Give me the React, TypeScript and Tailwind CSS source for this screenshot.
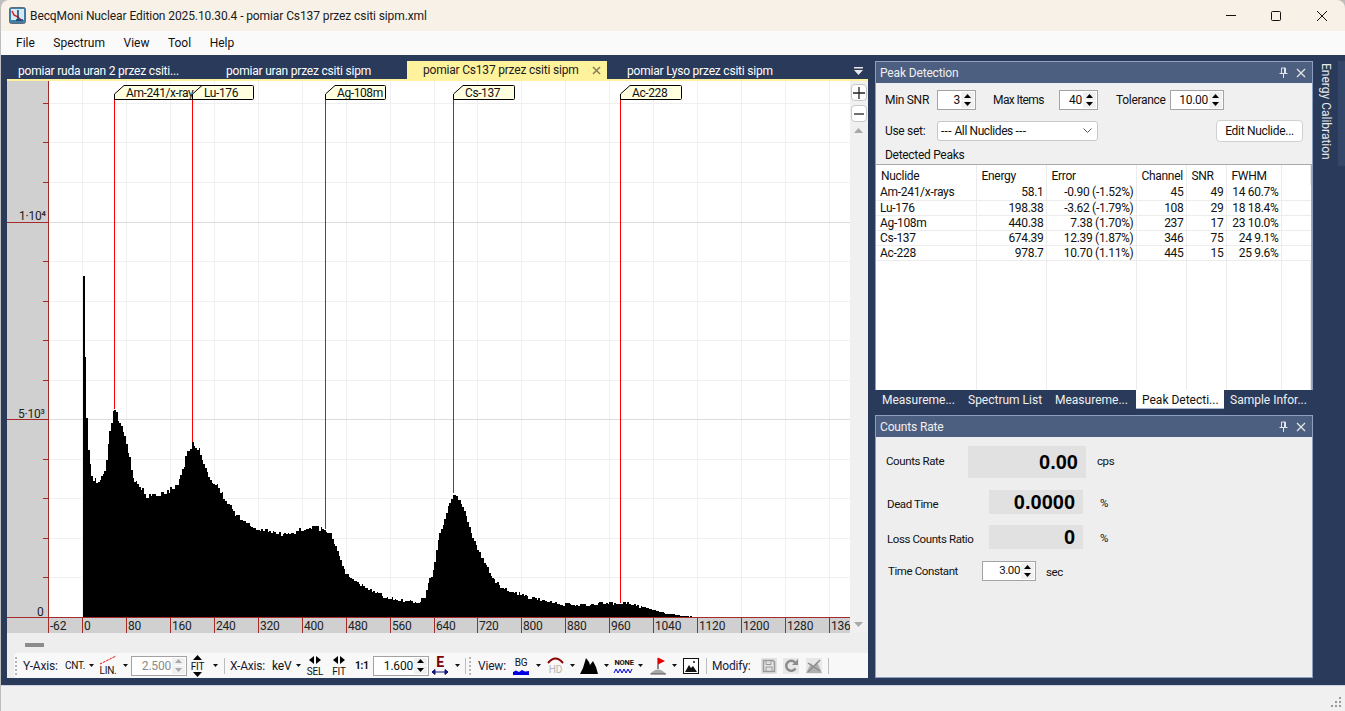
import React from 'react';

// Spectrum outline, page x / page y of the top of the bars
const outline: [number, number][] = [
  [83, 276], [84.5, 341], [85, 393], [87, 431], [88, 451], [90, 467], [91, 476], [93, 479], [96, 481], [100, 482],
  [102, 473], [105, 473], [106, 463], [107, 453], [109, 434], [111, 422], [113, 413], [115, 409], [117, 420], [119, 419],
  [121, 428], [124, 438], [126, 448], [128, 452], [130, 463], [132, 475], [134, 480], [138, 485], [142, 490], [146, 496],
  [150, 494], [156, 495], [165, 494], [171, 489], [176, 486], [180, 477], [184, 464], [187, 452], [190, 447], [193, 442],
  [196, 449], [199, 451], [202, 458], [205, 467], [210, 479], [213, 483], [218, 488], [222, 493], [226, 503], [231, 509],
  [235, 515], [240, 518], [246, 524], [252, 527], [260, 530], [270, 531], [280, 534], [290, 535], [300, 530], [310, 527],
  [322, 529], [330, 534], [334, 543], [337, 552], [341, 562], [345, 573], [350, 577], [355, 581], [365, 587], [375, 592],
  [385, 597], [395, 599], [405, 601], [415, 602], [420, 601], [425, 597], [428, 583], [433, 570], [438, 540], [443, 523],
  [448, 507], [452, 497], [454, 493], [460, 503], [465, 512], [470, 530], [475, 543], [480, 555], [487, 568], [493, 580],
  [503, 588], [513, 592], [527, 597], [543, 601], [563, 604], [583, 605], [603, 603], [627, 603], [637, 606], [650, 609],
  [663, 613], [677, 615], [690, 616.6], [695, 617],
];

function buildSpectrum() {
  let seed = 4711;
  const rnd = () => {
    seed = (seed * 1103515245 + 12345) & 0x7fffffff;
    return seed / 0x7fffffff - 0.5;
  };
  let d = 'M83 617';
  let k = 0;
  for (let x = 83; x < 695; x += 1.65) {
    while (k < outline.length - 2 && outline[k + 1][0] <= x) k++;
    const [x0, y0] = outline[k];
    const [x1, y1] = outline[k + 1];
    let y = y0 + ((y1 - y0) * (x - x0)) / (x1 - x0);
    if (x > 92) y += rnd() * (x > 640 ? 1 : 3.2 + (617 - y) * 0.018);
    y = Math.min(617, Math.round(y));
    d += `L${Math.round(x)} ${y}L${Math.round(x + 1.65)} ${y}`;
  }
  return d + 'L695 617Z';
}
const spectrumPath = buildSpectrum();

const yTicks = Array.from({ length: 14 }, (_, i) => Math.round(617 - 39.55 * i));
const xTicks = [
  [82, '0'], [126, '80'], [170, '160'], [214, '240'], [258, '320'], [302, '400'], [346, '480'], [390, '560'],
  [434, '640'], [477, '720'], [521, '800'], [565, '880'], [609, '960'], [653, '1040'], [697, '1120'], [741, '1200'],
  [785, '1280'], [829, '136'],
] as [number, string][];

const markers = [
  { name: 'Am-241/x-ray', x: 114, top: 409, end: 205 },
  { name: 'Lu-176', x: 192, top: 442, end: 254 },
  { name: 'Ag-108m', x: 325, top: 529, end: 386 },
  { name: 'Cs-137', x: 453, top: 493, end: 515 },
  { name: 'Ac-228', x: 620, top: 603, end: 682 },
];

const peaks = [
  ['Am-241/x-rays', '58.1', '-0.90 (-1.52%)', '45', '49', '14 60.7%'],
  ['Lu-176', '198.38', '-3.62 (-1.79%)', '108', '29', '18 18.4%'],
  ['Ag-108m', '440.38', '7.38 (1.70%)', '237', '17', '23 10.0%'],
  ['Cs-137', '674.39', '12.39 (1.87%)', '346', '75', '24 9.1%'],
  ['Ac-228', '978.7', '10.70 (1.11%)', '445', '15', '25 9.6%'],
];

const SpectrumChart = () => (
  <svg viewBox="7 81 843 552" className="block w-[843px] h-[552px] shrink-0 text-[12px]">
    <g shapeRendering="crispEdges">
      <rect x="7" y="81" width="843" height="552" fill="#ffffff" />
      {xTicks.map(([x]) => <rect key={x} x={x} y="81" width="1" height="536" fill="#f0f0f0" />)}
      {yTicks.map((y, i) => (
        <rect key={y} x="49" y={y} width="801" height="1" fill={i % 5 === 0 ? '#dcdcdc' : '#f0f0f0'} />
      ))}
      <path d={spectrumPath} fill="#000000" />
      <rect x="7" y="81" width="41" height="552" fill="#d0d0d0" />
      <rect x="7" y="618" width="843" height="15" fill="#d0d0d0" />
      {yTicks.map((y, i) => (
        <rect key={y} x={i % 5 === 0 ? 7 : 43} y={y} width={i % 5 === 0 ? 41 : 5} height="1" fill="#a52a2a" />
      ))}
      <rect x="48" y="81" width="1" height="552" fill="#a52a2a" />
      <rect x="7" y="617" width="843" height="1" fill="#a52a2a" />
      {xTicks.map(([x]) => <rect key={x} x={x} y="617" width="1" height="16" fill="#a52a2a" />)}
      {markers.map((m) => <rect key={m.x} x={m.x} y="99" width="1" height={m.top - 99} fill="#ff0000" />)}
    </g>
    {markers.map((m) => (
      <g key={m.name}>
        <path
          d={`M${m.x + 0.5} 99.5V94L${m.x + 10} 85.5H${m.end - 1.5}Q${m.end - 0.5} 85.5 ${m.end - 0.5} 86.5V98.5Q${m.end - 0.5} 99.5 ${m.end - 1.5} 99.5Z`}
          fill="#ffffe0"
          stroke="#000000"
        />
        <text x={m.x + 12} y="97" fill="#111111" letterSpacing="-0.4">{m.name}</text>
      </g>
    ))}
    <text x="19" y="220" fill="#222222">1·10⁴</text>
    <text x="18" y="418" fill="#222222">5·10³</text>
    <text x="37" y="616" fill="#222222">0</text>
    <text x="50" y="630" fill="#222222">-62</text>
    {xTicks.map(([x, label]) => <text key={x} x={x + 2} y="630" fill="#222222">{label}</text>)}
  </svg>
);

const Spin = ({ value, className, disabled }: { value: string; className: string; disabled?: boolean }) => (
  <div className={`flex items-center h-[20px] shrink-0 bg-white border border-[#a3a3a3] ${disabled ? 'bg-[#f0f0f0] text-[#8a8a8a]' : 'text-[#111111]'} ${className}`}>
    <span className="flex-1 text-right pr-[1px] leading-none">{value}</span>
    <span className="flex flex-col w-[13px] h-[16px] mr-[1px] shrink-0 gap-[1px]">
      <span className="flex-1 flex items-center justify-center bg-[#f0f0f0]">
        <svg width="7" height="4" viewBox="0 0 7 4"><path d="M3.5 0L7 4H0Z" fill={disabled ? '#aaaaaa' : '#000000'} /></svg>
      </span>
      <span className="flex-1 flex items-center justify-center bg-[#f0f0f0]">
        <svg width="7" height="4" viewBox="0 0 7 4"><path d="M0 0H7L3.5 4Z" fill={disabled ? '#aaaaaa' : '#000000'} /></svg>
      </span>
    </span>
  </div>
);

const Caret = ({ className = '' }: { className?: string }) => (
  <svg width="5" height="3" viewBox="0 0 5 3" className={`shrink-0 ${className}`}><path d="M0 0H5L2.5 3Z" fill="#111111" /></svg>
);

const Grip = ({ className = '' }: { className?: string }) => (
  <span className={`flex flex-col gap-[2px] shrink-0 ${className}`}>
    {[0, 1, 2, 3, 4].map((i) => <span key={i} className="w-[2px] h-[2px] bg-[#b5b5b5]" />)}
  </span>
);

const Sep = ({ className = '' }: { className?: string }) => <span className={`w-px h-[16px] bg-[#bdbdbd] shrink-0 ${className}`} />;

const IconText = ({ x, y, size, fill = '#111111', children, weight }: { x: number; y: number; size: number; fill?: string; weight?: number; children: string }) => (
  <text x={x} y={y} fontSize={size} fill={fill} fontWeight={weight} textAnchor="middle">{children}</text>
);

const ToolBar = () => (
  <div className="flex items-center h-[25px] ml-[7px] mr-0 bg-[#f8f8f8] rounded-l-[3px] text-[#1b1b3a] text-[12px] whitespace-nowrap">
    <Grip className="ml-[1px]" />
    <span className="ml-[6px] w-[36px]">Y-Axis:</span>
    <span className="ml-[6px] w-[19px] text-[10px] text-[#111111]">CNT.</span>
    <Caret className="ml-[5px]" />
    <svg width="18" height="21" viewBox="0 0 18 21" className="ml-[5px] shrink-0">
      <path d="M1 9L17 1" stroke="#e00000" strokeDasharray="2.5 1" fill="none" />
      <IconText x={9} y={19} size={10}>LIN.</IconText>
    </svg>
    <Caret className="ml-[6px]" />
    <Spin value="2.500" disabled className="ml-[3px] w-[56px] text-[12px]" />
    <svg width="15" height="22" viewBox="0 0 15 22" className="ml-[3px] shrink-0">
      <path d="M7.5 0L12 5H3Z M7.5 22L12 17H3Z" fill="#000000" />
      <IconText x={7.5} y={15} size={10}>FIT</IconText>
    </svg>
    <Caret className="ml-[8px]" />
    <Sep className="ml-[6px]" />
    <span className="ml-[5px] w-[36px]">X-Axis:</span>
    <span className="ml-[6px] w-[20px] text-[#111111]">keV</span>
    <Caret className="ml-[4px]" />
    <svg width="18" height="21" viewBox="0 0 18 21" className="ml-[5px] shrink-0">
      <path d="M8 1V9L3 5Z M10 1V9L15 5Z" fill="#000000" />
      <IconText x={9} y={20} size={10}>SEL</IconText>
    </svg>
    <svg width="14" height="21" viewBox="0 0 14 21" className="ml-[8px] shrink-0">
      <path d="M6 1V9L1 5Z M8 1V9L13 5Z" fill="#000000" />
      <IconText x={7} y={20} size={10}>FIT</IconText>
    </svg>
    <span className="ml-[9px] w-[13px] text-[10px] font-bold text-[#111111]">1:1</span>
    <Spin value="1.600" className="ml-[5px] w-[56px]" />
    <svg width="18" height="21" viewBox="0 0 18 21" className="ml-[2px] shrink-0">
      <text x="9" y="12" fontSize="14" fontWeight="700" fill="#7a0000" textAnchor="middle">E</text>
      <path d="M1 17H17M1 17L4 14.5V19.5ZM17 17L14 14.5V19.5Z" stroke="#12127a" fill="#12127a" />
    </svg>
    <Caret className="ml-[6px]" />
    <Sep className="ml-[5px]" />
    <Grip className="ml-[3px]" />
    <span className="ml-[7px] w-[29px]">View:</span>
    <svg width="16" height="20" viewBox="0 0 16 20" className="ml-[6px] shrink-0">
      <IconText x={8} y={10} size={10}>BG</IconText>
      <path d="M0 19V16L3 14.5L6 16L9 14L12 15.5L16 15V19Z" fill="#0000e0" />
    </svg>
    <Caret className="ml-[7px]" />
    <svg width="17" height="21" viewBox="0 0 17 21" className="ml-[6px] shrink-0">
      <path d="M1 8Q8.500 -1 16 8" stroke="#8b0000" strokeWidth="2" fill="none" />
      <IconText x={8.5} y={18} size={10} fill="#b5b5b5">HD</IconText>
    </svg>
    <Caret className="ml-[6px]" />
    <svg width="18" height="17" viewBox="0 0 18 17" className="ml-[5px] shrink-0">
      <path d="M0 17L3 11L6 1L9 5L10 8L13 4L16 10L18 17Z" fill="#000000" />
    </svg>
    <Caret className="ml-[6px]" />
    <svg width="19" height="20" viewBox="0 0 19 20" className="ml-[5px] shrink-0 overflow-visible">
      <text x="0.500" y="9" fontSize="7.500" fontWeight="700" fill="#111111">NONE</text>
      <path d="M0 17L2 13L4 17L6 13L8 17L10 13L12 17L14 13L16 17L18 13" stroke="#0000e0" fill="none" />
    </svg>
    <Caret className="ml-[5px]" />
    <svg width="16" height="18" viewBox="0 0 16 18" className="ml-[7px] shrink-0">
      <path d="M0 17Q8 8 16 17Z" fill="#a8a8a8" />
      <path d="M0.500 17H16" stroke="#555555" />
      <path d="M8 12V1" stroke="#222222" />
      <path d="M8 0.500L15 4L8 7.500Z" fill="#e00000" />
    </svg>
    <Caret className="ml-[6px]" />
    <svg width="16" height="16" viewBox="0 0 16 16" className="ml-[6px] shrink-0">
      <rect x="0.500" y="0.500" width="15" height="15" fill="#ffffff" stroke="#111111" />
      <path d="M2 14L6 7L8 10L10 8L14 14Z" fill="#111111" />
      <circle cx="11" cy="4" r="1" fill="#111111" />
    </svg>
    <Sep className="ml-[7px]" />
    <span className="ml-[5px] w-[42px]">Modify:</span>
    <svg width="16" height="16" viewBox="0 0 16 16" className="ml-[7px] shrink-0">
      <rect width="16" height="16" fill="#e2e2e2" />
      <path d="M2.500 2.500H12L13.500 4V13.500H2.500Z" fill="none" stroke="#9a9a9a" strokeWidth="1.500" />
      <path d="M5 3V6.500H10V3M5 13V9H11V13" fill="none" stroke="#9a9a9a" />
    </svg>
    <svg width="16" height="16" viewBox="0 0 16 16" className="ml-[6px] shrink-0">
      <rect width="16" height="16" fill="#e8e8e8" />
      <path d="M12.500 10.500A5 5 0 1 1 12 4.500" fill="none" stroke="#8c8c8c" strokeWidth="2.500" />
      <path d="M15 1V7H9Z" fill="#8c8c8c" />
    </svg>
    <svg width="16" height="16" viewBox="0 0 16 16" className="ml-[7px] shrink-0">
      <rect width="16" height="16" fill="#e8e8e8" />
      <path d="M0 15L5 5L8 9L11 4L16 15Z" fill="#b0b0b0" />
      <path d="M2 14L14 2M2 5L14 13" stroke="#8c8c8c" strokeWidth="1.500" />
    </svg>
    <Sep className="ml-[6px]" />
  </div>
);

const DocTabs = () => (
  <div className="flex items-end h-[20px] text-[12px] text-white whitespace-nowrap">
    <span className="w-[199px] pl-[11px] h-[18px] leading-[20px]">pomiar ruda uran 2 przez csiti...</span>
    <span className="w-[201px] pl-[20px] h-[18px] leading-[20px]">pomiar uran przez csiti sipm</span>
    <span className="w-[200px] pl-[16px] h-[18px] leading-[20px] bg-[#fff29d] text-[#1c1c1c] flex items-center justify-between pr-[6px]">
      pomiar Cs137 przez csiti sipm
      <svg width="9" height="9" viewBox="0 0 9 9"><path d="M1 1L8 8M8 1L1 8" stroke="#8a8258" strokeWidth="1.600" /></svg>
    </span>
    <span className="w-[252px] pl-[20px] h-[18px] leading-[20px]">pomiar Lyso przez csiti sipm</span>
    <svg width="9" height="8" viewBox="0 0 9 8" className="mb-[4px] -ml-[5px] shrink-0">
      <path d="M0 0H9V1.500H0Z M0 3H9L4.500 8Z" fill="#e8e8e8" />
    </svg>
  </div>
);

const ZoomButton = ({ children }: { children: React.ReactNode }) => (
  <div className="w-[16px] h-[17px] ml-px bg-white border border-[#c8c8c8] rounded-[4px] flex items-center justify-center">{children}</div>
);

const ChartSide = () => (
  <div className="flex flex-col items-start w-[18px] h-[552px] bg-[#f0f0f0] pt-[3px]">
    <ZoomButton><svg width="12" height="12" viewBox="0 0 12 12"><path d="M6 0V12M0 6H12" stroke="#222222" strokeWidth="1.300" /></svg></ZoomButton>
    <div className="h-[4px]" />
    <ZoomButton><svg width="10" height="2" viewBox="0 0 10 2"><path d="M0 1H10" stroke="#222222" strokeWidth="1.300" /></svg></ZoomButton>
    <svg width="9" height="5" viewBox="0 0 9 5" className="ml-[4px] mt-[6px]"><path d="M4.500 0L9 5H0Z" fill="#a8a8a8" /></svg>
    <svg width="9" height="5" viewBox="0 0 9 5" className="ml-[4px] mt-auto mb-[6px]"><path d="M0 0H9L4.500 5Z" fill="#a8a8a8" /></svg>
  </div>
);

const PanelTitle = ({ title }: { title: string }) => (
  <div className="flex items-center h-[21px] bg-[#4d5f80] text-[#f0f0f0] text-[12px] tracking-[-0.15px] pl-[4px] pr-[6px] shrink-0">
    <span className="flex-1">{title}</span>
    <svg width="9" height="11" viewBox="0 0 9 11" className="shrink-0">
      <path d="M2.500 1H6.500V6.500H2.500ZM5.500 1V6.500M0.500 6.500H8.500M4.500 6.500V11" fill="none" stroke="#e4e4e4" />
    </svg>
    <svg width="10" height="10" viewBox="0 0 10 10" className="ml-[8px] shrink-0">
      <path d="M1 1L9 9M9 1L1 9" stroke="#e4e4e4" strokeWidth="1.300" />
    </svg>
  </div>
);

const PeakDetection = () => (
  <div className="flex flex-col h-[329px] border border-b-0 border-[#8ea0c2] bg-[#f0f0f0] text-[12px] tracking-[-0.3px] text-[#111111] mt-[6px]">
    <PanelTitle title="Peak Detection" />
    <div className="flex items-center mt-[7px] pl-[9px]">
      <span className="w-[52px]">Min SNR</span>
      <Spin value="3" className="w-[39px]" />
      <span className="ml-[17px] w-[66px] tracking-[-0.6px]">Max Items</span>
      <Spin value="40" className="w-[39px]" />
      <span className="ml-[18px] w-[54px]">Tolerance</span>
      <Spin value="10.00" className="w-[54px]" />
    </div>
    <div className="flex items-center mt-[10px] pl-[9px]">
      <span className="w-[52px]">Use set:</span>
      <div className="flex items-center justify-between w-[161px] h-[20px] bg-white border border-[#c8c8c8] rounded-[3px] px-[3px] tracking-[-0.4px]">
        <span><span className="tracking-[0.3px]">---</span> All Nuclides <span className="tracking-[0.3px]">---</span></span>
        <svg width="9" height="6" viewBox="0 0 9 6" className="mr-[2px]"><path d="M0.500 0.500L4.500 4.500L8.500 0.500" fill="none" stroke="#555555" /></svg>
      </div>
      <div className="ml-[118px] w-[87px] h-[22px] bg-white border border-[#d0d0d0] rounded-[4px] flex items-center justify-center">Edit Nuclide...</div>
    </div>
    <div className="pl-[9px] h-[16px] mt-[5px] leading-[16px]">Detected Peaks</div>
    <div className="flex-1 min-h-0 mt-[1px] bg-white border-t border-r border-[#a9a9a9] overflow-hidden">
      <table className="table-fixed w-full h-full border-collapse leading-none">
        <colgroup>
          <col className="w-[100px]" />
          <col className="w-[70px]" />
          <col className="w-[90px]" />
          <col className="w-[50px]" />
          <col className="w-[40px]" />
          <col className="w-[55px]" />
          <col />
        </colgroup>
        <thead>
          <tr className="h-[20px]">
            {['Nuclide', 'Energy', 'Error', 'Channel', 'SNR', 'FWHM', ''].map((h) => (
              <th key={h} className="font-normal text-left pl-[5px] pt-[5px] border-r border-[#ececec] align-top">{h}</th>
            ))}
          </tr>
        </thead>
        <tbody>
          {peaks.map((row) => (
            <tr key={row[0]} className="h-[15px] border-b border-[#ececec]">
              {row.map((cell, i) => (
                <td key={i} className={`border-r border-[#ececec] ${i === 0 ? 'pl-[4px] text-left' : 'pr-[2px] text-right'}`}>{cell}</td>
              ))}
              <td />
            </tr>
          ))}
          <tr>
            {[0, 1, 2, 3, 4, 5, 6].map((i) => <td key={i} className="border-r border-[#ececec]" />)}
          </tr>
        </tbody>
      </table>
    </div>
  </div>
);

const PanelTabs = () => (
  <div className="flex h-[19px] text-[12px] tracking-normal text-[#f0f0f0] whitespace-nowrap">
    <span className="w-[86px] pl-[7px] leading-[21px]">Measureme...</span>
    <span className="w-[87px] pl-[7px] leading-[21px]">Spectrum List</span>
    <span className="w-[88px] pl-[7px] leading-[21px]">Measureme...</span>
    <span className="w-[88px] pl-[6px] leading-[20px] bg-white text-[#111111] border-b border-[#a9b6d0]">Peak Detecti...</span>
    <span className="pl-[6px] leading-[21px]">Sample Infor...</span>
  </div>
);

const Readout = ({ value, className }: { value: string; className: string }) => (
  <div className={`flex items-center justify-end pr-[8px] bg-[#e1e1e1] font-['Liberation_Sans',sans-serif] font-bold text-[20px] tracking-normal text-black leading-none ${className}`}>{value}</div>
);

const CountsRate = () => (
  <div className="flex flex-col h-[263px] mt-[6px] border border-[#8ea0c2] bg-[#eeeeee] text-[11.500px] tracking-[-0.4px] text-[#111111]">
    <PanelTitle title="Counts Rate" />
    <div className="flex items-center mt-[9px] pl-[10px]">
      <span className="w-[82px]">Counts Rate</span>
      <Readout value="0.00" className="w-[118px] h-[32px]" />
      <span className="ml-[11px]">cps</span>
    </div>
    <div className="flex items-start h-[24px] mt-[12px] pl-[11px]">
      <span className="w-[102px] mt-[6px]">Dead Time</span>
      <Readout value="0.0000" className="w-[94px] h-[24px]" />
      <span className="ml-[17px] mt-[5px]">%</span>
    </div>
    <div className="flex items-start h-[24px] mt-[11px] pl-[11px]">
      <span className="w-[102px] mt-[6px]">Loss Counts Ratio</span>
      <Readout value="0" className="w-[94px] h-[24px]" />
      <span className="ml-[17px] mt-[5px]">%</span>
    </div>
    <div className="flex items-start h-[20px] mt-[12px] pl-[12px]">
      <span className="w-[94px] mt-[2px]">Time Constant</span>
      <Spin value="3.00" className="w-[54px]" />
      <span className="ml-[10px] mt-[3px]">sec</span>
    </div>
  </div>
);

const App = () => (
  <div className="w-[1345px] h-[711px] flex flex-col overflow-hidden bg-[#bdbdbd] font-[Roboto,sans-serif] text-[12px] tracking-[-0.2px]">
    <div className="flex items-center h-[31px] shrink-0 bg-[#f7f1e8] rounded-t-[8px] ml-px text-[#1a1a1a] text-[12px] tracking-[-0.1px]">
      <svg width="17" height="17" viewBox="0 0 17 17" className="ml-[8px] shrink-0">
        <rect x="0.500" y="0.500" width="16" height="16" rx="2" fill="#3f7fa8" stroke="#5f6b78" />
        <rect x="2" y="2" width="13" height="11" fill="#d8e8f2" />
        <path d="M3 4L5 8L9 10L12 13" stroke="#d02020" strokeWidth="1.500" fill="none" />
        <path d="M9 3V13M7 13H14" stroke="#1a3f6a" strokeWidth="1.500" fill="none" />
      </svg>
      <span className="ml-[4px] flex-1 whitespace-nowrap">BecqMoni Nuclear Edition 2025.10.30.4 - pomiar Cs137 przez csiti sipm.xml</span>
      <svg width="10" height="1" viewBox="0 0 10 1" className="shrink-0"><path d="M0 0.500H10" stroke="#111111" /></svg>
      <svg width="10" height="10" viewBox="0 0 10 10" className="ml-[35px] shrink-0"><rect x="0.500" y="0.500" width="9" height="9" rx="1" fill="none" stroke="#111111" /></svg>
      <svg width="10" height="10" viewBox="0 0 10 10" className="ml-[36px] mr-[18px] shrink-0"><path d="M0 0L10 10M10 0L0 10" stroke="#111111" /></svg>
    </div>
    <div className="flex items-center h-[24px] shrink-0 bg-[#fafafa] ml-px pl-[15px] gap-[18.500px] text-[#111111] tracking-normal">
      <span>File</span>
      <span>Spectrum</span>
      <span>View</span>
      <span>Tool</span>
      <span>Help</span>
    </div>
    <div className="flex h-[630px] shrink-0 bg-[#2a3a5a] ml-px">
      <div className="flex flex-col w-[861px] ml-[6px] mt-[4px] shrink-0">
        <DocTabs />
        <div className="h-[2px] bg-[#fff29d]" />
        <div className="flex h-[552px]">
          <SpectrumChart />
          <ChartSide />
        </div>
        <div className="h-[20px] bg-[#eeeeee] flex items-center pl-[18px] pt-[4px]">
          <span className="w-[19px] h-[4px] bg-[#8c8c8c]" />
        </div>
        <div className="bg-[#eeeeee]">
          <ToolBar />
        </div>
      </div>
      <div className="flex flex-col w-[438px] ml-[7px] shrink-0">
        <PeakDetection />
        <PanelTabs />
        <CountsRate />
      </div>
      <div className="flex-1 flex items-start">
        <div className="flex-1 pt-[8px] flex justify-center text-[#e8e8e8] tracking-normal">
          <span className="[writing-mode:vertical-rl] leading-[18px]">Energy Calibration</span>
        </div>
        <div className="w-[7px] h-[105px] mt-[6px] bg-[#354768] shrink-0" />
      </div>
    </div>
    <div className="flex items-end justify-end flex-1 bg-[#f0f0f0] border-t border-[#cfd5e0] ml-px pb-[3px] pr-[3px]">
      <svg width="11" height="11" viewBox="0 0 11 11">
        <path d="M8 0h2v2H8ZM4 4h2v2H4ZM8 4h2v2H8ZM0 8h2v2H0ZM4 8h2v2H4ZM8 8h2v2H8Z" fill="#9a9a9a" />
      </svg>
    </div>
  </div>
);

export default App;
